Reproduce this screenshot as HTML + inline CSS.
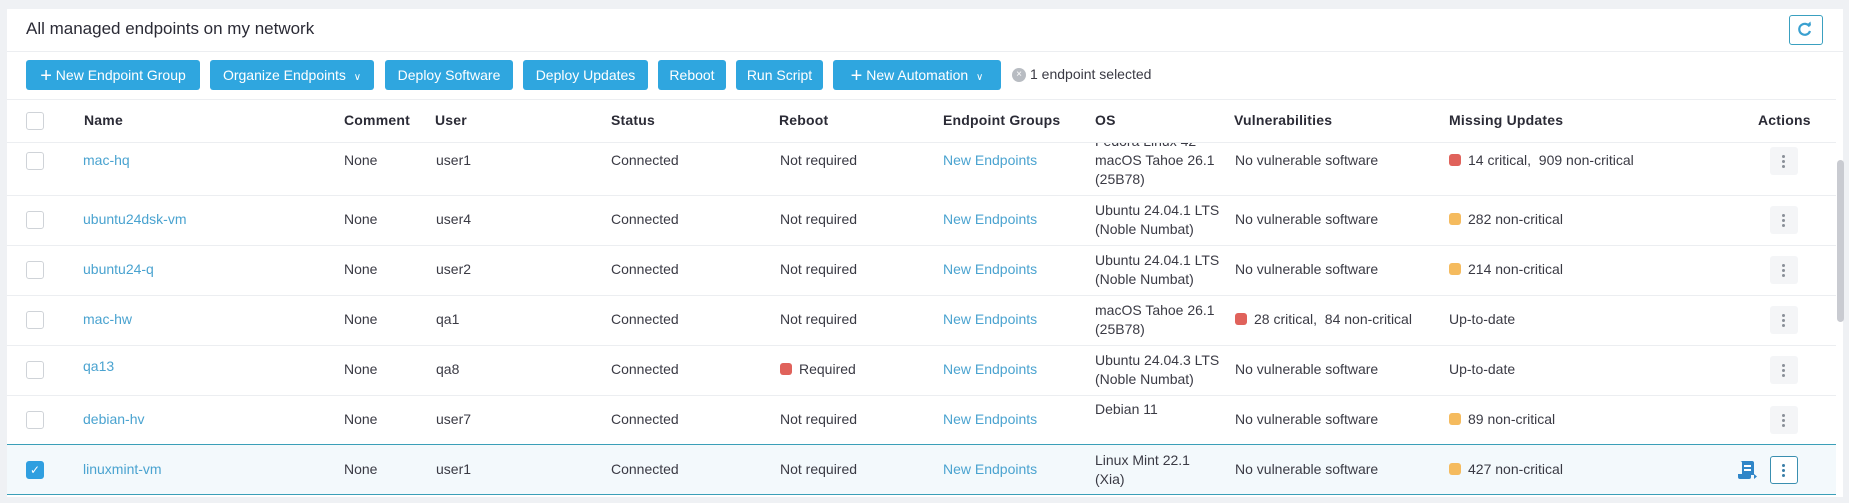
<!DOCTYPE html>
<html><head><meta charset="utf-8"><style>
*{box-sizing:border-box;margin:0;padding:0}
body{width:1849px;height:503px;background:#eff1f4;font-family:"Liberation Sans",sans-serif;position:relative;overflow:hidden;color:#3a3a44;font-size:14px}
.panel{position:absolute;left:7px;top:9px;width:1836px;height:494px;background:#fff}
.a{position:absolute;white-space:nowrap}
.btn{position:absolute;top:60px;height:30px;background:#2fa6df;color:#fff;border-radius:3px;font-size:14px;line-height:30px;text-align:center}
.hl{position:absolute;left:7px;height:1px;background:#eceef1}
.h{position:absolute;top:112px;font-weight:bold;color:#2b2b36;font-size:14px;letter-spacing:0.2px}
.cb{position:absolute;left:26px;width:18px;height:18px;border:1px solid #cfd3d8;border-radius:3px;background:#fff}
.lnk{color:#4aa3d0}
.dot{display:inline-block;width:12px;height:12px;border-radius:3px;vertical-align:-1px;margin-right:7px}
.r{background:#e0625b}.o{background:#f5bb5e}
.act{position:absolute;left:1770px;width:28px;height:28px;background:#f4f5f7;border-radius:3px}
.act i{position:absolute;left:12px;width:3px;height:3px;border-radius:50%;background:#8a8f98}
</style></head><body>
<div class="panel"></div>
<div class="a" style="left:26px;top:19px;font-size:17px;color:#2b2b36">All managed endpoints on my network</div>
<div class="a" style="left:1789px;top:15px;width:34px;height:30px;border:1.5px solid #3aa0c0;border-radius:3px;background:#fff">
<svg width="31" height="27" viewBox="0 0 31 27"><path d="M19.5 10.5 A5.5 5.5 0 1 0 20 15" fill="none" stroke="#3aa0d0" stroke-width="2.2"/><path d="M16.5 9 L21 9.5 L20.5 5.5 Z" fill="#3aa0d0"/></svg></div>
<div class="hl" style="top:51px;width:1836px"></div>
<div class="btn" style="left:26px;width:174px"><b style="font-size:20px;font-weight:normal;vertical-align:-2px">+</b> New Endpoint Group</div>
<div class="btn" style="left:210px;width:164px">Organize Endpoints &nbsp;<span style="font-size:10px">&#8744;</span></div>
<div class="btn" style="left:385px;width:128px">Deploy Software</div>
<div class="btn" style="left:523px;width:125px">Deploy Updates</div>
<div class="btn" style="left:658px;width:68px">Reboot</div>
<div class="btn" style="left:736px;width:87px">Run Script</div>
<div class="btn" style="left:833px;width:168px"><b style="font-size:20px;font-weight:normal;vertical-align:-2px">+</b> New Automation &nbsp;<span style="font-size:10px">&#8744;</span></div>
<div class="a" style="left:1012px;top:68px;width:14px;height:14px;border-radius:50%;background:#b8bcc2;color:#fff;font-size:10px;line-height:14px;text-align:center">×</div>
<div class="a" style="left:1030px;top:66px;color:#3a3a44">1 endpoint selected</div>
<div class="hl" style="top:99px;width:1829px"></div>

<div class="a" style="left:7px;top:444px;width:1829px;height:51px;background:#f3f9fc;border-top:1.5px solid #3a9fb8;border-bottom:1.5px solid #3a9fb8"></div>
<div class="hl" style="top:195px;width:1829px"></div>
<div class="hl" style="top:245px;width:1829px"></div>
<div class="hl" style="top:295px;width:1829px"></div>
<div class="hl" style="top:345px;width:1829px"></div>
<div class="hl" style="top:395px;width:1829px"></div>
<div class="a" style="left:7px;top:497px;width:1836px;height:6px;background:#eff1f4"></div>

<div id="rows"></div>
<div class="a" style="left:7px;top:100px;width:1829px;height:42px;background:#fff"></div>
<div id="hdr"></div>
<div class="a" style="left:1837px;top:160px;width:7px;height:162px;background:#c9cbd1;border-radius:4px"></div>
<script>
var rows=[
["mac-hq","user1","Not required","macOS Tahoe 26.1|(25B78)","No vulnerable software","<span class='dot r'></span>14 critical,&nbsp; 909 non-critical",161],
["ubuntu24dsk-vm","user4","Not required","Ubuntu 24.04.1 LTS|(Noble Numbat)","No vulnerable software","<span class='dot o'></span>282 non-critical",220],
["ubuntu24-q","user2","Not required","Ubuntu 24.04.1 LTS|(Noble Numbat)","No vulnerable software","<span class='dot o'></span>214 non-critical",270],
["mac-hw","qa1","Not required","macOS Tahoe 26.1|(25B78)","<span class='dot r'></span>28 critical,&nbsp; 84 non-critical","Up-to-date",320],
["qa13","qa8","<span class='dot r'></span>Required","Ubuntu 24.04.3 LTS|(Noble Numbat)","No vulnerable software","Up-to-date",370],
["debian-hv","user7","Not required","Debian 11|","No vulnerable software","<span class='dot o'></span>89 non-critical",420],
["linuxmint-vm","user1","Not required","Linux Mint 22.1|(Xia)","No vulnerable software","<span class='dot o'></span>427 non-critical",470]];
var h="";
rows.forEach(function(r,i){
var c=r[6],t=c-9,os=r[3].split("|");
h+=i==6?"<div class='cb' style='top:"+(c-9)+"px;background:#2f9fe0;border-color:#2f9fe0;color:#fff;font-size:12px;line-height:16px;text-align:center'>✓</div>":"<div class='cb' style='top:"+(c-9)+"px'></div>";
h+="<div class='a lnk' style='left:83px;top:"+(i==4?t-3:t)+"px'>"+r[0]+"</div>";
h+="<div class='a' style='left:344px;top:"+t+"px'>None</div>";
h+="<div class='a' style='left:436px;top:"+t+"px'>"+r[1]+"</div>";
h+="<div class='a' style='left:611px;top:"+t+"px'>Connected</div>";
h+="<div class='a' style='left:780px;top:"+t+"px'>"+r[2]+"</div>";
h+="<div class='a lnk' style='left:943px;top:"+t+"px'>New Endpoints</div>";
var ot=i==5?c-20:(i==0?c-10:c-19);
if(i==0)h+="<div class='a' style='left:1095px;top:"+(c-29)+"px;line-height:19px'>Fedora Linux 42</div>";
h+="<div class='a' style='left:1095px;top:"+ot+"px;line-height:19px'>"+os[0]+"<br>"+(os[1]||"")+"</div>";
h+="<div class='a' style='left:1235px;top:"+t+"px'>"+r[4]+"</div>";
h+="<div class='a' style='left:1449px;top:"+t+"px'>"+r[5]+"</div>";
if(i==6){
h+="<div class='act' style='top:"+(c-14)+"px;background:#fff;border:1px solid #3a8fb0'><i style='top:7px;left:11px;background:#3a7fa8'></i><i style='top:12px;left:11px;background:#3a7fa8'></i><i style='top:17px;left:11px;background:#3a7fa8'></i></div>";
h+="<svg class='a' style='left:1736px;top:"+(c-11)+"px' width='22' height='22' viewBox='0 0 22 22'><path d='M4 2h12a2 2 0 0 1 2 2v12H6V4a2 2 0 0 0-2-2z' fill='#2f86c8'/><rect x='8' y='6' width='7' height='2' fill='#fff'/><rect x='8' y='10' width='7' height='2' fill='#fff'/><path d='M2 15h13v3a2 2 0 0 1-2 2H4a2 2 0 0 1-2-2z' fill='#2f86c8'/><path d='M18 15l3 2.5-3 2.5z' fill='#2f86c8'/></svg>";
}else{
h+="<div class='act' style='top:"+(c-14)+"px'><i style='top:8px'></i><i style='top:13px'></i><i style='top:18px'></i></div>";
}
});
document.getElementById("rows").innerHTML=h;
var hd="<div class='cb' style='top:112px'></div>";
[["Name",84],["Comment",344],["User",435],["Status",611],["Reboot",779],["Endpoint Groups",943],["OS",1095],["Vulnerabilities",1234],["Missing Updates",1449],["Actions",1758]].forEach(function(x){hd+="<div class='h' style='left:"+x[1]+"px'>"+x[0]+"</div>";});
hd+="<div class='hl' style='top:142px;width:1829px'></div>";
document.getElementById("hdr").innerHTML=hd;
</script>
</body></html>
